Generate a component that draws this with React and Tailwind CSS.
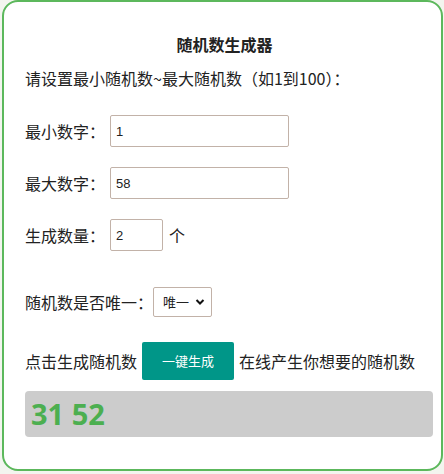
import { useState } from 'react'

export default function App() {
  const [min, setMin] = useState('1')
  const [max, setMax] = useState('58')
  const [count, setCount] = useState('2')
  const [unique, setUnique] = useState('1')
  const [result, setResult] = useState('31 52')

  // 🔹 generate random numbers
  const generate = () => {
    const lo = parseInt(min) || 1
    const hi = parseInt(max) || 100
    const n = parseInt(count) || 1
    const out = []
    let guard = 0
    while (out.length < n && guard < 10000) {
      guard++
      const r = Math.floor(Math.random() * (hi - lo + 1)) + lo
      if (unique === '1' && out.includes(r)) continue
      out.push(r)
    }
    setResult(out.join(' '))
  }

  return (
    <div className="w-[444px] h-[474px] bg-[#f3f5ef] pl-[2px] pr-[1px] font-['Microsoft_YaHei','Noto_Sans_CJK_SC',sans-serif] text-[16px] text-[#222]">
      <div className="h-[471px] bg-white border-2 border-[#5cb85c] rounded-[16px] pl-[21px] pr-[8px] pt-[30px]">

        {/* TITLE */}
        <h1 className="pr-[9px] text-center font-bold text-[16px] leading-[24px] text-[#222]">随机数生成器</h1>

        <p className="mt-[10px] leading-[24px] whitespace-nowrap">请设置最小随机数~最大随机数（如1到100）：</p>

        {/* RANGE */}
        <div className="mt-[25px] flex items-center h-[32px]">
          <span className="w-[85px]">最小数字：</span>
          <input
            value={min}
            onChange={(e) => setMin(e.target.value)}
            className="w-[179px] h-[32px] border border-[#c2b2a8] rounded-[2px] px-[5px] text-[13px] font-['Liberation_Sans',sans-serif] outline-none"
          />
        </div>
        <div className="mt-[20px] flex items-center h-[32px]">
          <span className="w-[85px]">最大数字：</span>
          <input
            value={max}
            onChange={(e) => setMax(e.target.value)}
            className="w-[179px] h-[32px] border border-[#c2b2a8] rounded-[2px] px-[5px] text-[13px] font-['Liberation_Sans',sans-serif] outline-none"
          />
        </div>
        <div className="mt-[20px] flex items-center h-[32px]">
          <span className="w-[85px]">生成数量：</span>
          <input
            value={count}
            onChange={(e) => setCount(e.target.value)}
            className="w-[53px] h-[32px] border border-[#c2b2a8] rounded-[2px] px-[5px] text-[13px] font-['Liberation_Sans',sans-serif] outline-none"
          />
          <span className="ml-[6px]">个</span>
        </div>

        {/* UNIQUE */}
        <div className="mt-[36px] flex items-center h-[30px]">
          <span className="w-[128px] whitespace-nowrap">随机数是否唯一：</span>
          <div className="relative">
            <select
              value={unique}
              onChange={(e) => setUnique(e.target.value)}
              className="appearance-none w-[59px] h-[30px] border border-[#c2b2a8] rounded-[2px] pl-[9px] text-[13px] bg-white outline-none"
            >
              <option value="1">唯一</option>
              <option value="0">不唯一</option>
            </select>
            <svg className="absolute right-[7px] top-[11px] pointer-events-none" width="10" height="8" viewBox="0 0 10 8">
              <path d="M1.5 2 L5 5.5 L8.5 2" fill="none" stroke="#111" strokeWidth="2" />
            </svg>
          </div>
        </div>

        {/* GENERATE */}
        <div className="mt-[25px] flex items-center h-[38px] whitespace-nowrap">
          <span>点击生成随机数</span>
          <button
            onClick={generate}
            className="ml-[5px] w-[92px] h-[38px] bg-[#009688] text-white text-[13px] rounded-[2px]"
          >
            一键生成
          </button>
          <span className="ml-[5px]">在线产生你想要的随机数</span>
        </div>

        {/* RESULT */}
        <div className="mt-[11px] h-[46px] bg-[#cccccc] rounded-[4px] px-[6px] flex items-center">
          <span className="text-[29px] font-bold text-[#4caf50] font-['Open_Sans','Noto_Sans_CJK_SC',sans-serif]">{result}</span>
        </div>

      </div>
    </div>
  )
}
